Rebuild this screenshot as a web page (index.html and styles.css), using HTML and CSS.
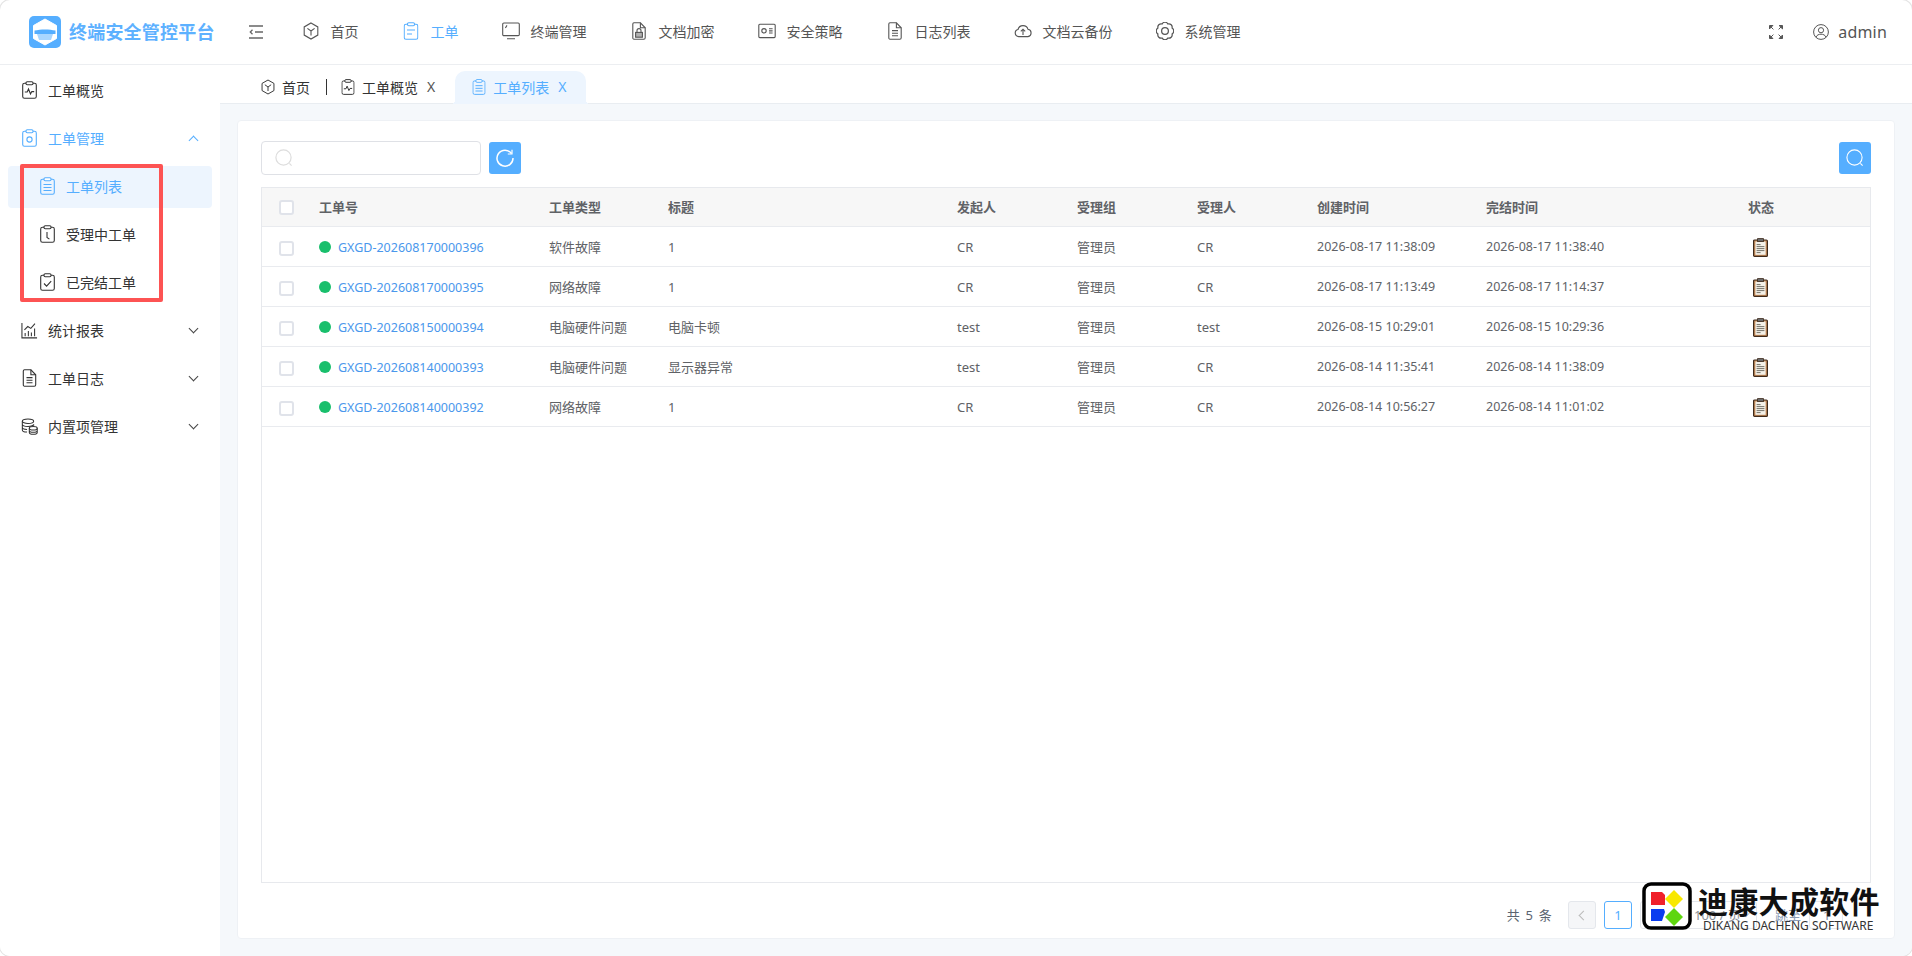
FILE: index.html
```html
<!DOCTYPE html>
<html lang="zh-CN">
<head>
  <meta charset="UTF-8" />
  <title>终端安全管控平台</title>
  <link rel="stylesheet" href="styles.css">
</head>
<body>
  <!-- icons -->
  <svg class="sprite" xmlns="http://www.w3.org/2000/svg">
    <symbol id="clip" viewBox="0 0 15 18">
      <rect x="0.7" y="2.2" width="13.6" height="15.1" rx="1.8"/>
      <rect x="4" y="0.7" width="7" height="3" rx="1.2" fill="#fff"/>
    </symbol>
    <symbol id="i-wave" viewBox="0 0 15 18"><use href="#clip"/><path d="M2.8 11h2.4l1.3-3 2 5 1.3-2.4h2.4"/></symbol>
    <symbol id="i-gear-clip" viewBox="0 0 15 18"><use href="#clip"/><circle cx="7.5" cy="10.5" r="2.6"/></symbol>
    <symbol id="i-list" viewBox="0 0 15 18"><use href="#clip"/><path d="M3.5 7.5h8M3.5 10.5h8M3.5 13.5h8"/></symbol>
    <symbol id="i-lines" viewBox="0 0 15 18"><use href="#clip"/><path d="M3.5 8h8M3.5 12h5"/></symbol>
    <symbol id="i-clock" viewBox="0 0 15 18"><use href="#clip"/><path d="M7 7v5.5l2.4 1.6"/></symbol>
    <symbol id="i-check" viewBox="0 0 15 18"><use href="#clip"/><path d="M4 10.5l2.6 2.6 4.6-5"/></symbol>
    <symbol id="i-hex" viewBox="0 0 16 18"><path d="M8 1l6.8 3.9v8.2L8 17l-6.8-3.9V4.9z"/><path d="M4.4 6.4L8 9l3.6-2.6M8 9v4.6"/></symbol>
    <symbol id="i-monitor" viewBox="0 0 18 18"><rect x="0.7" y="1" width="16.6" height="12.6" rx="1.2"/><path d="M5 16.8h8M3.4 6l1.6-2.600"/></symbol>
    <symbol id="i-doclock" viewBox="0 0 14 18"><path d="M2 .8h6.4l4.8 5v10a1.4 1.4 0 0 1-1.4 1.4H2A1.3 1.3 0 0 1 .8 15.8V2A1.3 1.3 0 0 1 2 .8z"/><path d="M8.4.8v5h4.8"/><rect x="3.6" y="10.4" width="6.8" height="4.8" fill="currentColor" fill-opacity="0.45"/><path d="M5 10.4V8.6a2 2 0 0 1 4 0v1.8"/></symbol>
    <symbol id="i-idcard" viewBox="0 0 18 16"><rect x="0.8" y="1.2" width="16.4" height="13.4" rx="1"/><circle cx="6" cy="7.8" r="2.2"/><path d="M11 5.8h3.6M11 7.9h3.6M11 10h3.6"/></symbol>
    <symbol id="i-doc" viewBox="0 0 14 18"><path d="M2 .8h6.4l4.8 5v10a1.4 1.4 0 0 1-1.4 1.4H2A1.3 1.3 0 0 1 .8 15.8V2A1.3 1.3 0 0 1 2 .8z"/><path d="M8.4.8v5h4.8M4 8.6h6M4 11.2h6M4 13.8h6"/></symbol>
    <symbol id="i-cloud" viewBox="0 0 18 18"><path d="M4.6 14.6a3.6 3.6 0 0 1-.6-7.1 5.2 5.2 0 0 1 10-.2 3.7 3.7 0 0 1 0 7.3z"/><path d="M9 13V7.4M6.8 9.4L9 7.2l2.2 2.2"/></symbol>
    <symbol id="i-gear" viewBox="1 1 16 16"><path d="M15.28 6.4A3 3 0 0 1 15.28 11.6A3 3 0 0 1 11.6 15.28A3 3 0 0 1 6.4 15.28A3 3 0 0 1 2.72 11.6A3 3 0 0 1 2.72 6.4A3 3 0 0 1 6.4 2.72A3 3 0 0 1 11.6 2.72A3 3 0 0 1 15.28 6.4z"/><circle cx="9" cy="9" r="3"/></symbol>
    <symbol id="i-chart" viewBox="0 0 18 18"><path d="M1 1v15.8h16"/><path d="M4.4 15v-3.4M7.8 15V9.6M11 15v-3.8M14.4 15V7"/><path d="M3.6 8.4l3.6-3.6 3.2 2 4.4-5"/></symbol>
    <symbol id="i-db" viewBox="0 0 18 18"><ellipse cx="7.4" cy="3.4" rx="6" ry="2.4"/><path d="M1.4 3.4v9.2c0 1.2 2.2 2.2 5 2.3M1.4 6.6c0 1.3 2.6 2.4 6 2.4s6-1.1 6-2.4v1.6M1.4 9.8c0 1.2 2.2 2.2 5 2.3"/><ellipse cx="13" cy="10.8" rx="4.2" ry="1.9"/><path d="M8.8 10.8v4.6c0 1 1.9 1.9 4.2 1.9s4.2-.9 4.2-1.9v-4.6M8.8 13.2c0 1 1.9 1.9 4.2 1.9s4.2-.9 4.2-1.9"/></symbol>
    <symbol id="i-search" viewBox="0 0 20 20"><circle cx="9.5" cy="9.5" r="7.6"/><path d="M15.4 15.4l2.2 2.2"/></symbol>
    <symbol id="i-note" viewBox="0 0 15 19">
      <rect x="0.6" y="2" width="13.8" height="16.4" rx="1" fill="#c98f5c" stroke="#3d2a1c" stroke-width="1.2"/>
      <rect x="2.4" y="3.6" width="10.2" height="13.2" fill="#f4f1e8" stroke="none"/>
      <rect x="4.6" y="0.6" width="5.8" height="3" fill="#6b6b6b" stroke="#3d2a1c" stroke-width="0.8"/>
      <path d="M3.6 6.6h4M3.6 8.6h7.8M3.6 10.6h7.8M3.6 12.6h7.8M3.6 14.6h4" stroke="#77736a" stroke-width="1"/>
    </symbol>
  </svg>

  <div class="app">
    <header class="topbar">
      <div class="brand">
        <svg class="brand-logo" viewBox="0 0 32 32">
          <rect width="32" height="32" rx="5" fill="#55aeff"/>
          <path d="M16 3l11.500 6.500v13L16 29 4.500 22.500v-13z" fill="#fff" stroke="#fff" stroke-linejoin="round"/>
          <path d="M7 15h18l-3 9H10z" fill="#a9d6ff"/>
          <path d="M5.500 14.500c6-1.500 15-1.500 21 0V18h-21z" fill="#55aeff"/>
        </svg>
        <span class="brand-name">终端安全管控平台</span>
      </div>
      <svg class="collapse" viewBox="0 0 14 14" fill="none" stroke="#666" stroke-width="1.300">
        <path d="M0 1h14M0 13h14M6 7h8M3.500 4.800L1.300 7l2.200 2.200"/>
      </svg>
      <nav class="nav">
        <a class="nav-item"><svg class="ico nav-ico"><use href="#i-hex"/></svg>首页</a>
        <a class="nav-item active"><svg class="ico nav-ico"><use href="#i-lines"/></svg>工单</a>
        <a class="nav-item"><svg class="ico nav-ico"><use href="#i-monitor"/></svg>终端管理</a>
        <a class="nav-item"><svg class="ico nav-ico"><use href="#i-doclock"/></svg>文档加密</a>
        <a class="nav-item"><svg class="ico nav-ico"><use href="#i-idcard"/></svg>安全策略</a>
        <a class="nav-item"><svg class="ico nav-ico"><use href="#i-doc"/></svg>日志列表</a>
        <a class="nav-item"><svg class="ico nav-ico"><use href="#i-cloud"/></svg>文档云备份</a>
        <a class="nav-item"><svg class="ico nav-ico"><use href="#i-gear"/></svg>系统管理</a>
      </nav>
      <div class="top-right">
        <svg class="fullscreen" viewBox="0 0 14 14" fill="#555" stroke="#555" stroke-width="1">
          <path d="M.5.500h3.400L.5 3.900zM2 2l2.400 2.400M13.500.500v3.400L10.100.500zM12 2L9.600 4.400M.5 13.500v-3.400l3.400 3.400zM2 12l2.400-2.400M13.500 13.500h-3.400l3.400-3.400zM12 12L9.600 9.600"/>
        </svg>
        <svg class="user-ico" viewBox="0 0 16 16" fill="none" stroke="#555" stroke-width="1">
          <circle cx="8" cy="8" r="7.400"/><circle cx="8" cy="6.200" r="2.600"/><path d="M3 13.200c.8-2.200 2.800-3 5-3s4.200.8 5 3"/>
        </svg>
        <span class="user-name">admin</span>
      </div>
    </header>

    <div class="main">
      <aside class="sidebar">
        <a class="side-item"><svg class="ico side-ico"><use href="#i-wave"/></svg>工单概览</a>
        <a class="side-item open"><svg class="ico side-ico"><use href="#i-gear-clip"/></svg>工单管理<span class="arrow up"></span></a>
        <a class="side-item child current"><svg class="ico side-ico"><use href="#i-list"/></svg>工单列表</a>
        <a class="side-item child"><svg class="ico side-ico"><use href="#i-clock"/></svg>受理中工单</a>
        <a class="side-item child"><svg class="ico side-ico"><use href="#i-check"/></svg>已完结工单</a>
        <a class="side-item"><svg class="ico side-ico chart"><use href="#i-chart"/></svg>统计报表<span class="arrow"></span></a>
        <a class="side-item"><svg class="ico side-ico"><use href="#i-doc"/></svg>工单日志<span class="arrow"></span></a>
        <a class="side-item"><svg class="ico side-ico chart"><use href="#i-db"/></svg>内置项管理<span class="arrow"></span></a>
        <div class="red-box"></div>
      </aside>

      <div class="content">
        <div class="tabs">
          <a class="tab"><svg class="ico tab-ico"><use href="#i-hex"/></svg>首页</a>
          <span class="tab-sep"></span>
          <a class="tab"><svg class="ico tab-ico"><use href="#i-wave"/></svg>工单概览<span class="tab-x">X</span></a>
          <a class="tab active"><svg class="ico tab-ico"><use href="#i-list"/></svg>工单列表<span class="tab-x">X</span></a>
        </div>

        <div class="page">
          <div class="card">
            <div class="toolbar">
              <div class="search-box"><svg class="ico search-ico"><use href="#i-search"/></svg></div>
              <button class="btn">
                <svg viewBox="0 0 20 20" fill="none" stroke="#fff" stroke-width="1.500"><path d="M16.500 5.500A8 8 0 1 0 18 10"/><path d="M17 1.800v4.200h-4.200" stroke-width="1.200"/></svg>
              </button>
              <button class="btn right"><svg class="ico btn-search"><use href="#i-search"/></svg></button>
            </div>

            <div class="table-wrap">
              <table class="grid">
                <colgroup>
                  <col class="c-check"><col class="c-no"><col class="c-type"><col class="c-title">
                  <col class="c-mid"><col class="c-mid"><col class="c-mid"><col class="c-time"><col class="c-end"><col>
                </colgroup>
                <thead>
                  <tr>
                    <th><span class="check"></span></th>
                    <th>工单号</th><th>工单类型</th><th>标题</th><th>发起人</th><th>受理组</th><th>受理人</th><th>创建时间</th><th>完结时间</th><th>状态</th>
                  </tr>
                </thead>
                <tbody>
                  <tr>
                    <td><span class="check"></span></td>
                    <td><span class="dot"></span><a class="link">GXGD-202608170000396</a></td>
                    <td>软件故障</td><td>1</td><td>CR</td><td>管理员</td><td>CR</td>
                    <td class="num">2026-08-17 11:38:09</td><td class="num">2026-08-17 11:38:40</td>
                    <td><svg class="note"><use href="#i-note"/></svg></td>
                  </tr>
                  <tr>
                    <td><span class="check"></span></td>
                    <td><span class="dot"></span><a class="link">GXGD-202608170000395</a></td>
                    <td>网络故障</td><td>1</td><td>CR</td><td>管理员</td><td>CR</td>
                    <td class="num">2026-08-17 11:13:49</td><td class="num">2026-08-17 11:14:37</td>
                    <td><svg class="note"><use href="#i-note"/></svg></td>
                  </tr>
                  <tr>
                    <td><span class="check"></span></td>
                    <td><span class="dot"></span><a class="link">GXGD-202608150000394</a></td>
                    <td>电脑硬件问题</td><td>电脑卡顿</td><td>test</td><td>管理员</td><td>test</td>
                    <td class="num">2026-08-15 10:29:01</td><td class="num">2026-08-15 10:29:36</td>
                    <td><svg class="note"><use href="#i-note"/></svg></td>
                  </tr>
                  <tr>
                    <td><span class="check"></span></td>
                    <td><span class="dot"></span><a class="link">GXGD-202608140000393</a></td>
                    <td>电脑硬件问题</td><td>显示器异常</td><td>test</td><td>管理员</td><td>CR</td>
                    <td class="num">2026-08-14 11:35:41</td><td class="num">2026-08-14 11:38:09</td>
                    <td><svg class="note"><use href="#i-note"/></svg></td>
                  </tr>
                  <tr>
                    <td><span class="check"></span></td>
                    <td><span class="dot"></span><a class="link">GXGD-202608140000392</a></td>
                    <td>网络故障</td><td>1</td><td>CR</td><td>管理员</td><td>CR</td>
                    <td class="num">2026-08-14 10:56:27</td><td class="num">2026-08-14 11:01:02</td>
                    <td><svg class="note"><use href="#i-note"/></svg></td>
                  </tr>
                </tbody>
              </table>
            </div>

            <div class="pager">
              <span class="total">共 5 条</span>
              <span class="pg disabled"><span class="pg-prev"></span></span>
              <span class="pg on">1</span>
              <span class="pg"></span>
              <span class="pg-size">100 / 页<span class="arrow small"></span></span>
              <span class="pg-jump">跳至</span>
              <span class="pg-input">1</span>
            </div>
          </div>
        </div>
      </div>
    </div>

    <!-- 水印 -->
    <div class="mark">
      <svg class="mark-logo" viewBox="0 0 50 48">
        <rect x="2" y="2" width="46" height="44" rx="7" fill="#fff" stroke="#000" stroke-width="3.500"/>
        <path d="M9 10h11l3 3v10H9z" fill="#f0202a"/>
        <path d="M9 27h13l1 3-3 9H9z" fill="#0a3cf0"/>
        <path d="M32 8l9 9-9 9-9-9z" fill="#f8e800"/>
        <path d="M32 26l9 9-9 9-9-9z" fill="#5fd60f"/>
      </svg>
      <div class="mark-text">
        <div class="mark-cn">迪康大成软件</div>
        <div class="mark-en">DIKANG DACHENG SOFTWARE</div>
      </div>
    </div>
  </div>
</body>
</html>
```

FILE: styles.css
```css
/* base */
* {
  box-sizing: border-box;
}

html,
body {
  margin: 0;
  height: 100%;
  overflow: hidden;
  background-color: #ffffff;
}

body {
  font-family: "Noto Sans", "Noto Sans CJK SC", sans-serif;
  font-size: 14px;
  color: #333333;
}

.sprite {
  position: absolute;
  width: 0;
  height: 0;
}

.ico {
  fill: none;
  stroke: currentColor;
  stroke-width: 1.1;
  flex: none;
}

.app {
  position: relative;
  display: flex;
  flex-direction: column;
  height: 956px;
  border-radius: 10px;
  overflow: hidden;
  background-color: #ffffff;
  box-shadow: 0 0 0 1px #e4e4e4;
}

/* top bar */
.topbar {
  display: flex;
  align-items: center;
  flex: none;
  height: 65px;
  padding: 0 25px 1px 29px;
  border-bottom: 1px solid #eceef1;
}

.brand {
  display: flex;
  align-items: center;
  gap: 8px;
}

.brand-logo {
  width: 32px;
  height: 32px;
}

.brand-name {
  padding-bottom: 1px;
  font-size: 18px;
  font-weight: 700;
  letter-spacing: 0.2px;
  color: #5db1ff;
  white-space: nowrap;
}

.collapse {
  width: 14px;
  height: 14px;
  margin-left: 34px;
}

.nav {
  display: flex;
  margin-left: 39px;
}

.nav-item {
  display: flex;
  align-items: center;
  gap: 11px;
  margin-right: 43px;
  padding-bottom: 2px;
  font-size: 14px;
  color: #555555;
  white-space: nowrap;
}

.nav-item.active {
  color: #55aeff;
}

.nav-ico {
  width: 18px;
  height: 18px;
}

.top-right {
  display: flex;
  align-items: center;
  margin-left: auto;
}

.fullscreen {
  width: 14px;
  height: 14px;
}

.user-ico {
  width: 16px;
  height: 16px;
  margin-left: 30px;
}

.user-name {
  margin-left: 9px;
  font-size: 16px;
  letter-spacing: 0.2px;
  color: #555555;
}

/* layout */
.main {
  display: flex;
  flex: 1;
  min-height: 0;
}

.sidebar {
  position: relative;
  flex: none;
  width: 220px;
  padding-top: 2px;
  background-color: #ffffff;
}

.side-item {
  display: flex;
  align-items: center;
  gap: 11px;
  height: 48px;
  padding: 0 0 2px 22px;
  color: #333333;
  font-size: 14px;
}

.side-item.open {
  color: #55aeff;
}

.side-item.child {
  padding-left: 40px;
  gap: 11px;
}

.side-item.current {
  position: relative;
  height: 42px;
  margin: 3px 8px;
  padding-left: 32px;
  border-radius: 4px;
  background-color: #edf5fe;
  color: #55aeff;
}

.side-ico {
  width: 15px;
  height: 18px;
}

.side-ico.chart {
  width: 17px;
  height: 17px;
  margin-left: -1px;
  margin-right: -1px;
}

.arrow {
  width: 7px;
  height: 7px;
  margin-left: auto;
  margin-right: 23px;
  margin-top: -4px;
  border-right: 1.3px solid #444444;
  border-bottom: 1.3px solid #444444;
  transform: rotate(45deg);
}

.arrow.up {
  margin-top: 4px;
  border-color: #55aeff;
  transform: rotate(225deg);
}

.red-box {
  position: absolute;
  left: 20px;
  top: 99px;
  width: 143px;
  height: 138px;
  border: 4px solid #fd5353;
  border-radius: 2px;
}

.content {
  display: flex;
  flex-direction: column;
  flex: 1;
  min-width: 0;
  background-color: #f5f8fb;
}

/* tabs */
.tabs {
  display: flex;
  align-items: flex-end;
  flex: none;
  height: 39px;
  padding-left: 41px;
  background-color: #ffffff;
  border-bottom: 1px solid #e9edf1;
}

.tab {
  display: flex;
  align-items: center;
  gap: 7px;
  height: 33px;
  margin-bottom: -1px;
  padding-bottom: 2px;
  color: #333333;
  font-size: 14px;
  white-space: nowrap;
}

.tab-ico {
  width: 14px;
  height: 16px;
}

.tab-x {
  margin-left: 2px;
  font-size: 14px;
  color: #555555;
}

.tab-sep {
  width: 1px;
  height: 16px;
  margin: 0 14px 8px 16px;
  background-color: #333333;
}

.tab.active {
  position: relative;
  margin-left: 20px;
  padding: 0 20px 2px 17px;
  border-radius: 10px 10px 0 0;
  background-color: #edf5fe;
  color: #55aeff;
}

.tab.active .tab-x {
  color: #55aeff;
}

.tab.active::before,
.tab.active::after {
  content: "";
  position: absolute;
  bottom: 0;
  width: 4px;
  height: 4px;
}

.tab.active::before {
  left: -4px;
  background: radial-gradient(circle at 0 0, transparent 4px, #edf5fe 4px);
}

.tab.active::after {
  right: -4px;
  background: radial-gradient(circle at 100% 0, transparent 4px, #edf5fe 4px);
}

/* card */
.page {
  flex: 1;
  min-height: 0;
  padding: 16px 17px 17px 17px;
}

.card {
  display: flex;
  flex-direction: column;
  height: 100%;
  padding: 20px 23px 0;
  background-color: #ffffff;
  border: 1px solid #eef1f5;
  border-radius: 4px;
}

.toolbar {
  display: flex;
  align-items: center;
  flex: none;
  height: 34px;
  margin-bottom: 12px;
}

.search-box {
  display: flex;
  align-items: center;
  width: 220px;
  height: 34px;
  padding-left: 12px;
  border: 1px solid #dfe1e6;
  border-radius: 4px;
}

.search-ico {
  width: 20px;
  height: 20px;
  color: #dddddd;
  stroke-width: 1.2;
}

.btn {
  display: flex;
  align-items: center;
  justify-content: center;
  width: 32px;
  height: 32px;
  margin-left: 8px;
  padding: 0;
  background-color: #55aeff;
  border: none;
  border-radius: 3px;
}

.btn svg {
  width: 20px;
  height: 20px;
}

.btn.right {
  margin-left: auto;
}

.btn-search {
  color: #ffffff;
}

/* table */
.table-wrap {
  flex: 1;
  min-height: 0;
  border: 1px solid #e7e9ed;
}

.grid {
  width: 100%;
  table-layout: fixed;
  border-collapse: separate;
  border-spacing: 0;
  font-size: 13px;
  color: #606266;
}

.c-check {
  width: 57px;
}

.c-no {
  width: 230px;
}

.c-type {
  width: 119px;
}

.c-title {
  width: 289px;
}

.c-mid {
  width: 120px;
}

.c-time {
  width: 169px;
}

.c-end {
  width: 262px;
}

.grid th,
.grid td {
  padding: 0;
  text-align: left;
  white-space: nowrap;
  border-bottom: 1px solid #e9ebef;
}

.grid th {
  height: 39px;
  padding-bottom: 2px;
  font-weight: 700;
  font-size: 13px;
  color: #606266;
  background-color: #f7f7f7;
}

.grid td {
  height: 40px;
}

.num {
  font-size: 12.5px;
}

.check {
  display: block;
  width: 15px;
  height: 15px;
  margin-left: 17px;
  margin-top: 3px;
  background-color: #ffffff;
  border: 2px solid #e0e3ea;
  border-radius: 3px;
}

.dot {
  display: inline-block;
  width: 12px;
  height: 12px;
  margin-right: 7px;
  vertical-align: -1px;
  background-color: #19bf6c;
  border-radius: 50%;
}

.link {
  font-size: 12.5px;
  color: #4a97ec;
}

.note {
  display: block;
  width: 15px;
  height: 19px;
  margin: 2px 0 0 5px;
}

/* pager */
.pager {
  display: flex;
  align-items: flex-start;
  justify-content: flex-end;
  flex: none;
  height: 55px;
  padding: 18px 28px 0 0;
  font-size: 13px;
  line-height: 28px;
  color: #5b6470;
}

.total {
  margin-right: 15px;
  letter-spacing: 1.2px;
}

.pg {
  display: flex;
  align-items: center;
  justify-content: center;
  width: 28px;
  height: 28px;
  margin-right: 8px;
  border: 1px solid #e4e7ec;
  border-radius: 3px;
}

.pg.disabled {
  background-color: #f5f6f8;
}

.pg.on {
  border-color: #55aeff;
  color: #55aeff;
}

.pg-prev {
  width: 7px;
  height: 7px;
  margin-left: 3px;
  border-left: 1px solid #bbbbbb;
  border-bottom: 1px solid #bbbbbb;
  transform: rotate(45deg);
}

.pg-size {
  display: flex;
  align-items: center;
  width: 81px;
  height: 28px;
  padding-left: 17px;
  border: 1px solid #e4e7ec;
  border-radius: 3px;
  color: #8a9099;
  white-space: nowrap;
}

.arrow.small {
  margin-right: 7px;
  width: 6px;
  height: 6px;
  border-color: #c0c4cc;
}

.pg-jump {
  margin-left: 18px;
  color: #8a9bb5;
}

.pg-input {
  width: 34px;
  height: 28px;
  margin-left: 8px;
  padding-left: 13px;
  line-height: 26px;
  border: 1px solid #e4e7ec;
  border-radius: 3px;
  color: #7b8ba5;
}

/* watermark */
.mark {
  position: absolute;
  left: 1642px;
  top: 882px;
  display: flex;
}

.mark-logo {
  width: 50px;
  height: 48px;
  flex: none;
}

.mark-text {
  margin-left: 6px;
  color: #111111;
}

.mark-cn {
  margin-top: -1px;
  font-family: "Noto Sans CJK SC", sans-serif;
  font-size: 30px;
  font-weight: 700;
  letter-spacing: 0.3px;
  line-height: 38px;
  white-space: nowrap;
}

.mark-en {
  margin: 0 0 0 5px;
  font-size: 12px;
  line-height: 14px;
  color: #333333;
  white-space: nowrap;
}
```
